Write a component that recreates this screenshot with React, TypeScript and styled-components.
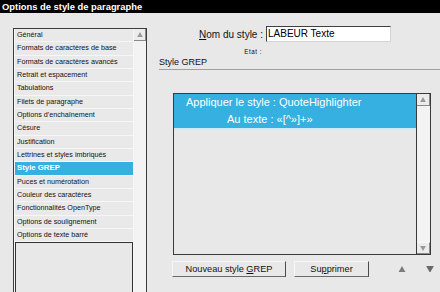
import React from "react";
import styled, { createGlobalStyle } from "styled-components";

const Global = createGlobalStyle`
  html, body { margin: 0; padding: 0; background: #e8e8e8; }
  body { font-family: "Liberation Sans", Arial, sans-serif; }
`;

const Window = styled.div`
  width: 440px;
  height: 292px;
  overflow: hidden;
  background: #e8e8e8;
  display: flex;
  flex-direction: column;
`;

const TitleBar = styled.div`
  height: 13px;
  flex: none;
  background: #000;
  color: #fff;
  font-weight: bold;
  font-size: 9.4px;
  line-height: 13px;
  padding-left: 2px;
  white-space: nowrap;
`;

const Body = styled.div`
  flex: 1;
  min-height: 0;
  display: flex;
`;

const ListBox = styled.div`
  margin: 15px 0 0 13px;
  width: 134px;
  box-sizing: border-box;
  border: 1px solid #3c3c3c;
  border-bottom: none;
  display: flex;
  background: #f6f6f6;
`;

const Items = styled.div`
  flex: 1;
  display: flex;
  flex-direction: column;
  gap: 1px;
  padding: 0 1px;
`;

const Row = styled.div<{ $active?: boolean }>`
  flex: none;
  height: 12.33px;
  line-height: 12.33px;
  padding-left: 2px;
  font-size: ${(p) => (p.$active ? "7.8px" : "7.2px")};
  font-weight: ${(p) => (p.$active ? "bold" : "normal")};
  color: ${(p) => (p.$active ? "#fff" : "#111")};
  background: ${(p) => (p.$active ? "#35b0e1" : "#e9e9e9")};
  white-space: nowrap;
  overflow: hidden;
`;

const EmptyBox = styled.div`
  flex: 1;
  border: 1px solid #333;
  border-bottom: none;
  background: #e8e8e8;
`;

const ScrollTrack = styled.div<{ $w: number }>`
  width: ${(p) => p.$w}px;
  flex: none;
  background: #f3f3f3;
  display: flex;
  flex-direction: column;
  justify-content: space-between;
`;

const ScrollBtn = styled.div`
  height: 11px;
  display: flex;
  align-items: center;
  justify-content: center;
  background: #ececec;
  border-right: 1px solid #8a8a8a;
  border-bottom: 1px solid #8a8a8a;
`;

const ScrollBtnDown = styled(ScrollBtn)`
  border-bottom: none;
  border-top: 1px solid #f8f8f8;
  border-right: 1px solid #8a8a8a;
  box-shadow: inset 0 -1px 0 #8a8a8a;
`;

const Panel = styled.div`
  flex: 1;
  display: flex;
  flex-direction: column;
  padding: 13px 0 0 12px;
`;

const NameRow = styled.div`
  display: flex;
  align-items: center;
  gap: 3px;
  height: 16px;
`;

const Label = styled.label<{ $w: number; $size: number }>`
  width: ${(p) => p.$w}px;
  text-align: right;
  font-size: ${(p) => p.$size}px;
  color: #111;
  white-space: nowrap;
`;

const Field = styled.div`
  width: 125px;
  height: 16px;
  box-sizing: border-box;
  background: #fff;
  border-top: 1px solid #404040;
  border-left: 1px solid #404040;
  border-right: 1px solid #d4d4d4;
  border-bottom: 1px solid #d4d4d4;
  font-size: 10px;
  line-height: 14px;
  padding-left: 1px;
  color: #000;
`;

const StateRow = styled.div`
  margin-top: 6px;
  height: 8px;
  line-height: 8px;
  display: flex;
`;

const Heading = styled.div`
  margin-top: 1px;
  font-size: 9px;
  line-height: 10px;
  color: #111;
  padding-bottom: 2px;
  border-bottom: 1px solid #a0a0a0;
`;

const GrepList = styled.div`
  margin: 23px 0 0 14px;
  width: 258px;
  height: 162px;
  box-sizing: border-box;
  border: 1px solid #3a3a3a;
  display: flex;
  background: #e8e8e8;
`;

const GrepContent = styled.div`
  flex: 1;
  border-right: 1px solid #3a3a3a;
`;

const Rule = styled.div`
  background: #35b0e1;
  color: #fff;
  font-size: 11px;
  line-height: 16.5px;
  height: 34px;
  border-bottom: 2px solid #cfe9f6;
  white-space: nowrap;
`;

const RuleLine = styled.div<{ $indent: number }>`
  padding-left: ${(p) => p.$indent}px;
`;

const ButtonRow = styled.div`
  margin: 6px 0 0 13px;
  display: flex;
  align-items: center;
  gap: 8px;
`;

const Button = styled.button<{ $w: number }>`
  width: ${(p) => p.$w}px;
  height: 16px;
  box-sizing: border-box;
  padding: 0;
  background: #e8e8e8;
  border-top: 1px solid #f6f6f6;
  border-left: 1px solid #f6f6f6;
  border-right: 1px solid #4a4a4a;
  border-bottom: 1px solid #6a6a6a;
  font-family: "Liberation Sans", Arial, sans-serif;
  font-size: 9.2px;
  color: #111;
  line-height: 14px;
`;

const Arrows = styled.div`
  margin-left: 21px;
  display: flex;
  gap: 20px;
`;

const Tri = ({ up, color, size = 8 }: { up?: boolean; color: string; size?: number }) => (
  <svg width={size} height={size * 0.85} viewBox="0 0 8 7">
    <path d={up ? "M4 0 L8 7 L0 7 Z" : "M0 0 L8 0 L4 7 Z"} fill={color} />
  </svg>
);

const sections = [
  "Général",
  "Formats de caractères de base",
  "Formats de caractères avancés",
  "Retrait et espacement",
  "Tabulations",
  "Filets de paragraphe",
  "Options d'enchaînement",
  "Césure",
  "Justification",
  "Lettrines et styles imbriqués",
  "Style GREP",
  "Puces et numérotation",
  "Couleur des caractères",
  "Fonctionnalités OpenType",
  "Options de soulignement",
  "Options de texte barré",
];

export default function App() {
  return (
    <Window>
      <Global />
      <TitleBar>Options de style de paragraphe</TitleBar>
      <Body>
        <ListBox>
          <Items>
            {sections.map((s) => (
              <Row key={s} $active={s === "Style GREP"}>
                {s}
              </Row>
            ))}
            <EmptyBox />
          </Items>
          <ScrollTrack $w={12}>
            <ScrollBtn>
              <Tri up color="#9a9a9a" size={6} />
            </ScrollBtn>
          </ScrollTrack>
        </ListBox>
        <Panel>
          <NameRow>
            <Label $w={104} $size={10}>
              <u>N</u>om du style :
            </Label>
            <Field>LABEUR Texte</Field>
          </NameRow>
          <StateRow>
            <Label $w={103} $size={6.3} style={{ letterSpacing: "0.5px" }}>
              Etat :
            </Label>
          </StateRow>
          <Heading>Style GREP</Heading>
          <GrepList>
            <GrepContent>
              <Rule>
                <RuleLine $indent={12}>Appliquer le style : QuoteHighlighter</RuleLine>
                <RuleLine $indent={53}>Au texte : «[^»]+»</RuleLine>
              </Rule>
            </GrepContent>
            <ScrollTrack $w={13}>
              <ScrollBtn>
                <Tri up color="#9a9a9a" size={6} />
              </ScrollBtn>
              <ScrollBtnDown>
                <Tri color="#9a9a9a" size={6} />
              </ScrollBtnDown>
            </ScrollTrack>
          </GrepList>
          <ButtonRow>
            <Button $w={114}>
              Nouveau style <u>G</u>REP
            </Button>
            <Button $w={75}>
              Su<u>p</u>primer
            </Button>
            <Arrows>
              <Tri up color="#7c7c7c" />
              <Tri color="#6a6a6a" />
            </Arrows>
          </ButtonRow>
        </Panel>
      </Body>
    </Window>
  );
}
